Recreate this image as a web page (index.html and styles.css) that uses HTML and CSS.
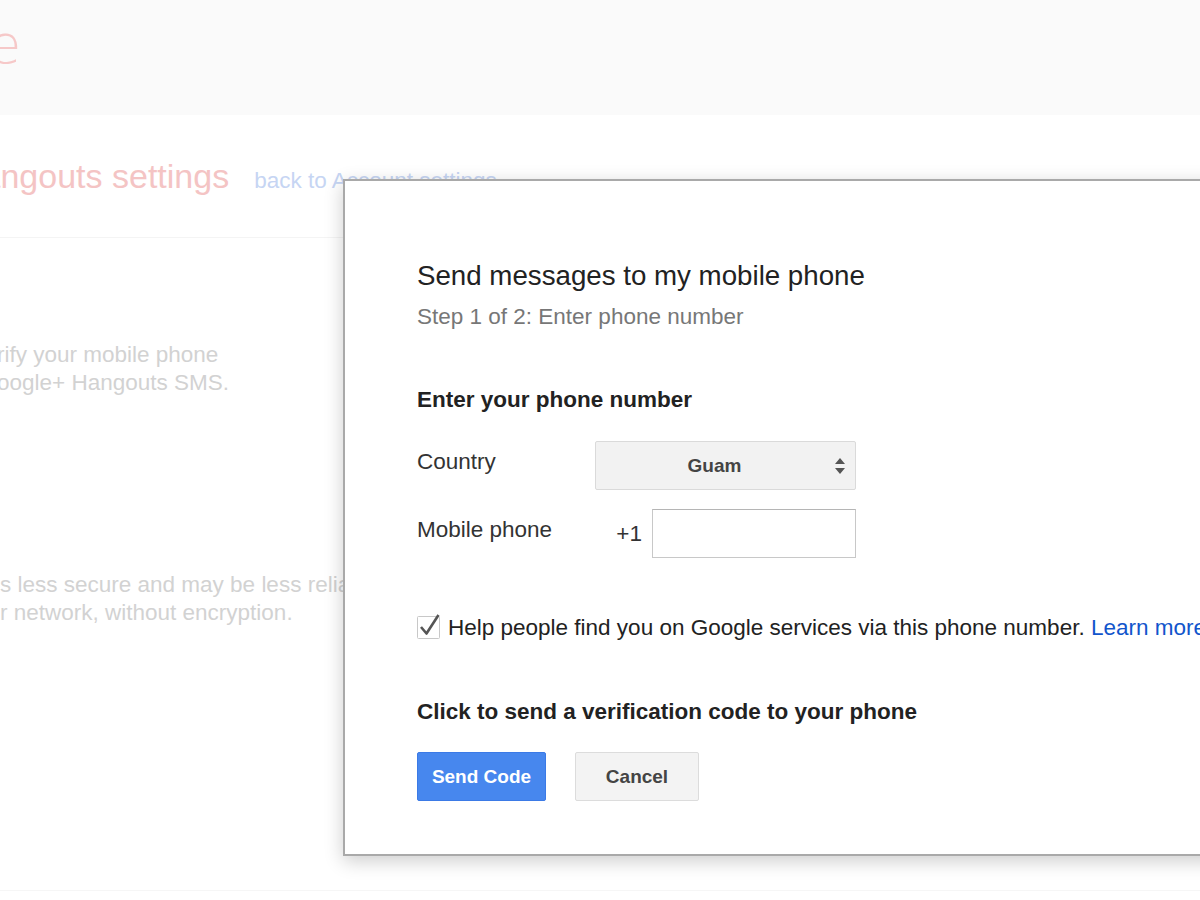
FILE: index.html
```html
<!DOCTYPE html>
<html>
<head>
<meta charset="utf-8">
<link rel="stylesheet" href="styles.css">
</head>
<body>
<div class="page">
  <header class="topbar">
    <span class="logo">e</span>
  </header>
  <section class="titlebar">
    <h1 class="page-title">Hangouts settings</h1>
    <a class="back-link">back to Account settings</a>
  </section>
  <p class="bg-text first">rify your mobile phone<br>oogle+ Hangouts SMS.</p>
  <p class="bg-text second">s less secure and may be less reliable<br>r network, without encryption.</p>
  <div class="bottom-rule"></div>
</div>

<div class="dialog">
  <h2 class="dlg-title">Send messages to my mobile phone</h2>
  <div class="dlg-step">Step 1 of 2: Enter phone number</div>

  <h3 class="dlg-heading first-heading">Enter your phone number</h3>
  <div class="form-grid">
    <label class="field-label">Country</label>
    <div class="select">
      <span class="select-value">Guam</span>
      <svg class="select-arrows" width="12" height="18" viewBox="0 0 12 18"><path d="M6 1 L11 7 L1 7 Z M1 11 L11 11 L6 17 Z" fill="#555"/></svg>
    </div>
    <label class="field-label">Mobile phone</label>
    <div class="phone-field">
      <span class="prefix">+1</span>
      <span class="text-input"></span>
    </div>
  </div>

  <div class="check-row">
    <svg class="checkbox" width="26" height="28" viewBox="0 0 26 28"><rect x="1.5" y="5.5" width="22" height="22" rx="1" fill="#fff" stroke="#c8c8c8"/><path d="M5 16 L10.5 22.5 L22.5 4" fill="none" stroke="#555" stroke-width="2.6" stroke-linejoin="round"/></svg>
    <span class="check-text">Help people find you on Google services via this phone number. <a class="learn">Learn more</a></span>
  </div>

  <h3 class="dlg-heading second-heading">Click to send a verification code to your phone</h3>
  <div class="buttons">
    <button class="btn primary">Send Code</button>
    <button class="btn secondary">Cancel</button>
  </div>
</div>
</body>
</html>
```

FILE: styles.css
```css
html, body {
  margin: 0;
  padding: 0;
  height: 100%;
}
body {
  overflow: hidden;
  background: #fff;
  font-family: "Liberation Sans", Arial, sans-serif;
  position: relative;
}
.page {
  width: 1200px;
}
.topbar {
  height: 115px;
  background: #fafafa;
  overflow: hidden;
  position: relative;
}
.logo {
  display: block;
  margin-left: -12px;
  padding-top: 10px;
  font-family: "DejaVu Sans", sans-serif;
  font-weight: 200;
  font-size: 54px;
  line-height: 70px;
  color: #f6c8c8;
}
.titlebar {
  display: flex;
  align-items: baseline;
  padding: 41px 0 41px 0;
  border-bottom: 1px solid #f4f4f4;
}
.page-title {
  margin: 0 0 0 -43px;
  font-weight: normal;
  font-size: 34px;
  line-height: 40px;
  color: #f4c4c4;
  white-space: nowrap;
}
.back-link {
  margin-left: 25px;
  font-size: 22.5px;
  color: #c6d5f3;
  white-space: nowrap;
}
.bg-text {
  margin: 0;
  font-size: 22.5px;
  line-height: 28px;
  color: #d2d2d2;
  white-space: nowrap;
}
.bg-text.first {
  margin-top: 103px;
  margin-left: -3px;
}
.bg-text.second {
  margin-top: 174px;
  margin-left: 0;
}
.bottom-rule {
  margin-top: 263px;
  border-top: 1px solid #f6f6f6;
}

.dialog {
  position: absolute;
  left: 343px;
  top: 179px;
  width: 920px;
  border: 2px solid #a9a9a9;
  background: #fff;
  box-shadow: 0 5px 18px rgba(0, 0, 0, 0.2);
  padding: 79px 0 53px 72px;
  box-sizing: border-box;
  color: #222;
}
.dlg-title {
  margin: 0;
  font-weight: normal;
  font-size: 27.7px;
  line-height: 32px;
  color: #222;
}
.dlg-step {
  margin-top: 12px;
  font-size: 22.5px;
  line-height: 26px;
  color: #777;
}
.dlg-heading {
  margin: 0;
  font-weight: bold;
  font-size: 22.5px;
  line-height: 26px;
  color: #222;
}
.first-heading {
  margin-top: 57px;
}
.form-grid {
  margin-top: 28px;
  display: grid;
  grid-template-columns: 178px 261px;
  row-gap: 19px;
  align-items: start;
}
.field-label {
  padding-top: 8px;
  font-size: 22.5px;
  line-height: 26px;
  color: #333;
}
.select {
  height: 49px;
  box-sizing: border-box;
  border: 1px solid #dadada;
  border-radius: 2px;
  background: #f2f2f2;
  display: flex;
  align-items: center;
  position: relative;
}
.select-value {
  flex: 1;
  text-align: center;
  padding-right: 22px;
  font-weight: bold;
  font-size: 19px;
  color: #444;
}
.select-arrows {
  position: absolute;
  right: 9px;
  top: 15px;
}
.phone-field {
  display: flex;
  justify-content: flex-end;
  align-items: center;
  gap: 10px;
}
.prefix {
  font-size: 22.5px;
  color: #333;
}
.text-input {
  display: block;
  width: 204px;
  height: 49px;
  box-sizing: border-box;
  border: 1px solid #c8c8c8;
  border-top-color: #b5b5b5;
  background: #fff;
}
.check-row {
  margin-top: 57px;
  display: flex;
  align-items: center;
  gap: 6px;
  white-space: nowrap;
}
.checkbox {
  margin-left: -1px;
  margin-top: -6px;
  flex: none;
}
.check-text {
  font-size: 22.5px;
  line-height: 26px;
  color: #222;
}
.learn {
  color: #1155cc;
}
.second-heading {
  margin-top: 58px;
}
.buttons {
  margin-top: 27px;
  display: flex;
  gap: 29px;
}
.btn {
  height: 49px;
  box-sizing: border-box;
  border-radius: 2px;
  font-family: "Liberation Sans", Arial, sans-serif;
  font-weight: bold;
  font-size: 19px;
  padding: 0;
}
.btn.primary {
  width: 129px;
  background: #4787ee;
  border: 1px solid #3b7ae6;
  color: #fff;
}
.btn.secondary {
  width: 124px;
  background: #f3f3f3;
  border: 1px solid #dcdcdc;
  color: #444;
}
```
